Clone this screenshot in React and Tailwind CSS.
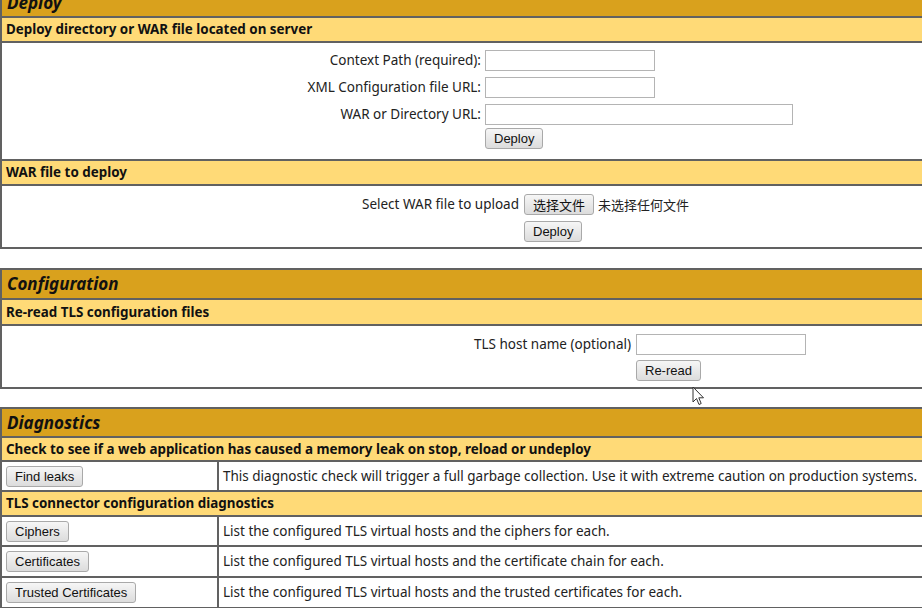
import React from 'react'

const Btn = ({ children, className = '' }) => (
  <button
    className={`h-[21px] px-[8px] rounded-[3px] border border-[#a9a9a9] bg-linear-to-b from-[#f6f6f6] to-[#dcdcdc] font-['Liberation_Sans',Arial,sans-serif] text-[13px] leading-none text-[#111] ${className}`}
  >
    {children}
  </button>
)

const Input = ({ className = '' }) => (
  <input className={`h-[21px] border border-[#b4b4b4] bg-white ${className}`} />
)

const Title = ({ children, className = '' }) => (
  <div className={`flex items-center bg-[#d9a11d] px-[5px] text-[17px] font-bold italic text-[#111] ${className}`}>
    {children}
  </div>
)

const Header = ({ children, className = '' }) => (
  <div className={`flex items-center border-t-2 border-[#616161] bg-[#ffda77] px-[4px] text-[13.4px] font-bold text-[#111] ${className}`}>
    {children}
  </div>
)

const DiagRow = ({ button, text, className = '' }) => (
  <div className={`flex border-t-2 border-[#616161] ${className}`}>
    <div className="flex w-[217px] items-center border-r-2 border-[#616161] pl-[4px]">
      <Btn>{button}</Btn>
    </div>
    <div className="flex items-center pl-[4px] text-[13.5px] text-[#222]">{text}</div>
  </div>
)

export default function App() {
  return (
    <div className="relative h-[608px] w-[922px] overflow-hidden bg-white font-['Noto_Sans','Noto_Sans_CJK_SC',sans-serif]">
      {/* Deploy */}
      <section className="-mt-[13px] w-[1044px] border-2 border-[#616161]">
        <Title className="h-[27px]">Deploy</Title>
        <Header className="h-[25px]">Deploy directory or WAR file located on server</Header>
        <div className="h-[118px] border-t-2 border-[#616161] pl-[288px] pt-[4px] text-[13.5px] text-[#222]">
          <div className="flex h-[27px] items-center">
            <span className="w-[191px] text-right">Context Path (required):</span>
            <Input className="ml-[4px] w-[170px]" />
          </div>
          <div className="flex h-[27px] items-center">
            <span className="w-[191px] text-right">XML Configuration file URL:</span>
            <Input className="ml-[4px] w-[170px]" />
          </div>
          <div className="flex h-[27px] items-center">
            <span className="w-[191px] text-right">WAR or Directory URL:</span>
            <Input className="ml-[4px] w-[308px]" />
          </div>
          <div className="flex">
            <span className="w-[191px]" />
            <Btn className="ml-[4px]">Deploy</Btn>
          </div>
        </div>
        <Header className="h-[25px]">WAR file to deploy</Header>
        <div className="h-[63px] border-t-2 border-[#616161] pl-[298px] pt-[5px] text-[13.5px] text-[#222]">
          <div className="flex h-[27px] items-center">
            <span className="w-[219px] text-right">Select WAR file to upload</span>
            <Btn className="ml-[5px] font-['Noto_Sans_CJK_SC',sans-serif]">选择文件</Btn>
            <span className="ml-[4px] font-['Noto_Sans_CJK_SC',sans-serif] text-[13px]">未选择任何文件</span>
          </div>
          <div className="mt-[3px] flex">
            <span className="w-[219px]" />
            <Btn className="ml-[5px]">Deploy</Btn>
          </div>
        </div>
      </section>

      {/* Configuration */}
      <section className="mt-[19px] w-[1044px] border-2 border-[#616161]">
        <Title className="h-[28px]">Configuration</Title>
        <Header className="h-[26px]">Re-read TLS configuration files</Header>
        <div className="h-[63px] border-t-2 border-[#616161] pl-[398px] pt-[5px] text-[13.5px] text-[#222]">
          <div className="flex h-[27px] items-center">
            <span className="w-[231px] text-right">TLS host name (optional)</span>
            <Input className="ml-[5px] w-[170px]" />
          </div>
          <div className="mt-[2px] flex">
            <span className="w-[231px]" />
            <Btn className="ml-[5px]">Re-read</Btn>
          </div>
        </div>
      </section>

      {/* Diagnostics */}
      <section className="mt-[18px] w-[1044px] border-2 border-[#616161]">
        <Title className="h-[27px]">Diagnostics</Title>
        <Header className="h-[24px]">Check to see if a web application has caused a memory leak on stop, reload or undeploy</Header>
        <DiagRow
          className="h-[30px]"
          button="Find leaks"
          text="This diagnostic check will trigger a full garbage collection. Use it with extreme caution on production systems."
        />
        <Header className="h-[25px]">TLS connector configuration diagnostics</Header>
        <DiagRow className="h-[30px]" button="Ciphers" text="List the configured TLS virtual hosts and the ciphers for each." />
        <DiagRow className="h-[31px]" button="Certificates" text="List the configured TLS virtual hosts and the certificate chain for each." />
        <DiagRow className="h-[31px]" button="Trusted Certificates" text="List the configured TLS virtual hosts and the trusted certificates for each." />
      </section>

      {/* mouse pointer */}
      <svg className="absolute left-[692px] top-[386px]" width="14" height="21" viewBox="0 0 14 21">
        <path
          d="M1 1 L1 16 L4.5 12.5 L7 18.5 L9.2 17.5 L6.8 11.8 L11.5 11.8 Z"
          fill="#fff"
          stroke="#333"
          strokeWidth="1"
          strokeLinejoin="round"
        />
      </svg>
    </div>
  )
}
